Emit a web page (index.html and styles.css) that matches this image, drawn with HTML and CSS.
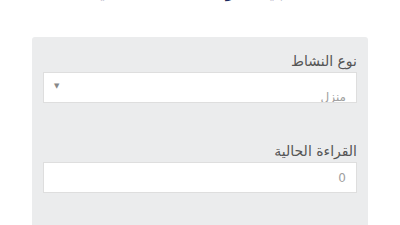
FILE: index.html
```html
<!DOCTYPE html>
<html lang="ar" dir="rtl">
<head>
    <meta charset="UTF-8">
    <meta name="viewport" content="width=device-width, initial-scale=1.0">
    <title>قراءة العداد</title>
    <link rel="stylesheet" href="styles.css">
</head>
<body>
    <h2 class="page-title">تسجيل قراءة العداد الحالية</h2>

    <form class="reading-card">
        <div class="field">
            <label class="field-label">نوع النشاط</label>
            <div class="select-box">
                <span class="placeholder">منزل</span>
                <span class="arrow">&#9660;</span>
            </div>
        </div>

        <div class="field">
            <label class="field-label">القراءة الحالية</label>
            <div class="input-box">
                <span class="placeholder">0</span>
            </div>
        </div>
    </form>
</body>
</html>
```

FILE: styles.css
```css
* {
    margin: 0;
    padding: 0;
    box-sizing: border-box;
    font-family: 'DejaVu Sans', sans-serif;
}

body {
    background-color: #ffffff;
    color: #333;
    overflow: hidden;
    height: 225px;
}

/* Title (scrolled mostly out of view) */
.page-title {
    font-size: 17px;
    font-weight: bold;
    color: #1e2a5e;
    text-align: center;
    line-height: 20px;
    margin-top: -19px;
    height: 56px;
}

/* Card */
.reading-card {
    width: 336px;
    margin: 0 auto;
    background: #ebeced;
    border-radius: 3px 3px 0 0;
    padding: 14px 11px 0 11px;
    height: 188px;
}

.field {
    margin-bottom: 38px;
}

.field-label {
    display: block;
    font-size: 14px;
    color: #555;
    line-height: 20px;
    margin-bottom: 1px;
}

.select-box,
.input-box {
    height: 31px;
    background: #fff;
    border: 1px solid #dedede;
    display: flex;
    align-items: center;
    justify-content: space-between;
    padding: 0 10px;
    overflow: hidden;
}

.placeholder {
    font-size: 12px;
    color: #a0a0a0;
}

.select-box .placeholder {
    margin-top: 18px;
}

.arrow {
    font-size: 7px;
    color: #888;
    align-self: flex-start;
    margin-top: 9px;
}
```
